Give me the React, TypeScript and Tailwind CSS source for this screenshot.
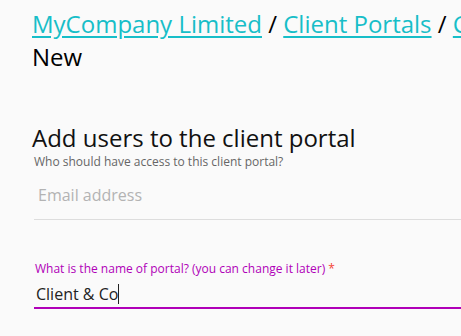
export default function App() {
  return (
    <div className="min-h-screen bg-[#fafafa] overflow-hidden" style={{ fontFamily: '"Open Sans", "Noto Sans", sans-serif' }}>
      <div className="pl-8 pt-[7px] w-[560px]">
        {/* Breadcrumb */}
        <div className="text-[24px] leading-[33px] text-black">
          <div className="whitespace-nowrap">
            <a href="#" className="text-[#17bec8] underline underline-offset-[3px]">MyCompany Limited</a>
            <span> / </span>
            <a href="#" className="text-[#17bec8] underline underline-offset-[3px]">Client Portals</a>
            <span> / </span>
            <a href="#" className="text-[#17bec8] underline underline-offset-[3px]">Client &amp; Co</a>
          </div>
          <div>New</div>
        </div>

        <div className="mt-[50px]">
          <h2 className="text-[24px] leading-[30px] text-[#111]">Add users to the client portal</h2>
          <p className="text-[12px] leading-[16px] text-[#666] mt-[1px] pl-[2px]">Who should have access to this client portal?</p>
        </div>

        <div className="mt-[10px] ml-[2px] border-b border-[#dddddd]">
          <input
            className="w-full bg-transparent outline-none text-[16px] leading-[24px] pt-[3px] pb-[12px] pl-[4px] text-[#333] placeholder:text-[#b3b3b3]"
            placeholder="Email address"
          />
        </div>

        <div className="mt-[41px] ml-[2px]">
          <label className="block text-[12px] leading-[16px] text-[#b000b8] pl-[1px]">
            What is the name of portal? (you can change it later) <span className="text-[#f44336]">*</span>
          </label>
          <div className="border-b-2 border-[#b000b8] flex items-center pt-[5px] pb-[1px] pl-[2px]">
            <span className="text-[16px] leading-[24px] text-[#222] whitespace-pre">Client &amp; Co</span>
            <span className="w-px h-[20px] bg-[#222]" />
          </div>
        </div>
      </div>
    </div>
  )
}
